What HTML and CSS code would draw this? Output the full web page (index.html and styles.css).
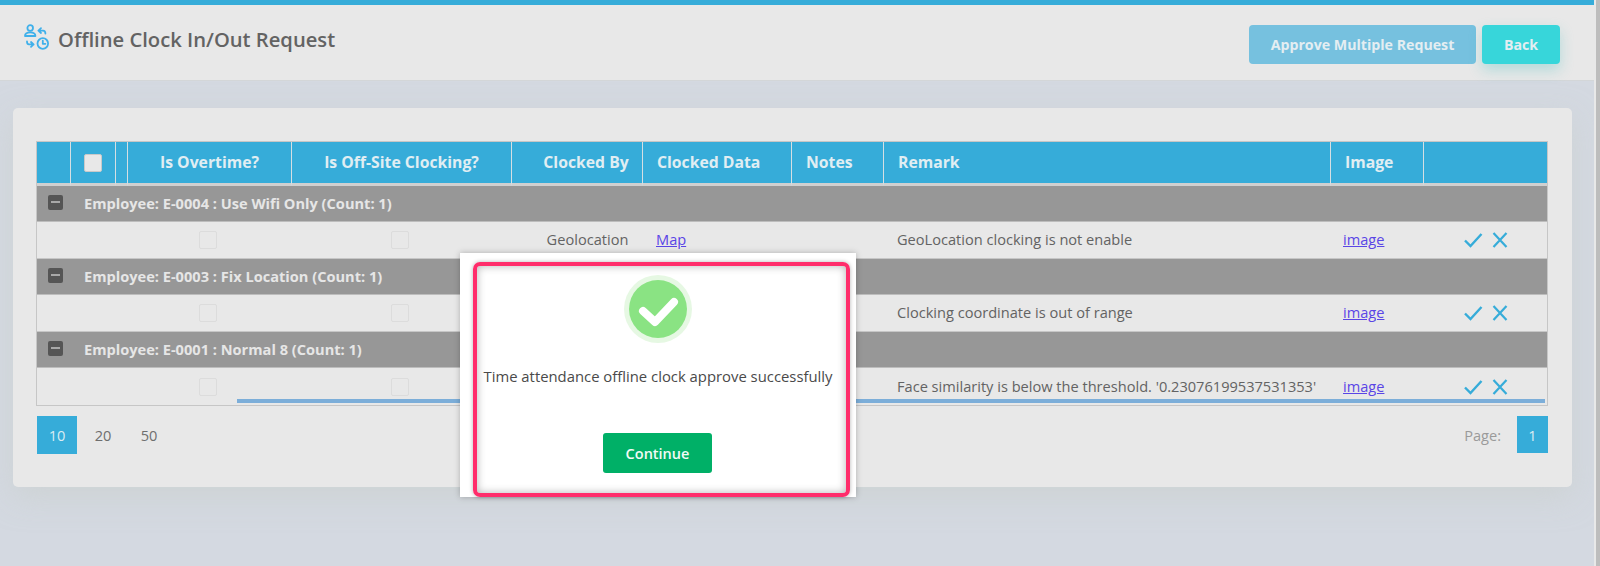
FILE: index.html
```html
<!DOCTYPE html>
<html lang="en">
<head>
<meta charset="utf-8">
<title>Offline Clock In/Out Request</title>
<link rel="stylesheet" href="styles.css">
</head>
<body>
<div class="page">
  <div class="accent"></div>
  <header class="topbar">
    <div class="title-wrap">
      <svg class="title-icon" viewBox="0 0 26 26" fill="none" stroke="#3fb0ea" stroke-width="1.8" stroke-linecap="round" stroke-linejoin="round">
        <circle cx="6.2" cy="4" r="2.8"/>
        <path d="M1 12c0-2.6 2-3.7 5.2-3.7s5.2 1.1 5.2 3.7z"/>
        <path d="M17 4.2l-2.6 2.4L17 9M14.4 6.6h4.6c1.6 0 2.4 1 2.4 3"/>
        <path d="M7 18l2.6 2.4L7 22.8M9.6 20.4H5c-1.4 0-2-1-2-3"/>
        <circle cx="18.8" cy="19.5" r="5.3"/>
        <path d="M18.8 16.6v3.2h2.6"/>
      </svg>
      <h1 class="title">Offline Clock In/Out Request</h1>
    </div>
    <div class="actions">
      <button class="btn btn-approve">Approve Multiple Request</button>
      <button class="btn btn-back">Back</button>
    </div>
  </header>

  <main class="card">
    <div class="grid-wrap">
      <table class="grid">
        <colgroup>
          <col class="c-expand"><col class="c-check"><col class="c-narrow"><col class="c-ot"><col class="c-off"><col class="c-by"><col class="c-data"><col class="c-notes"><col class="c-remark"><col class="c-image"><col class="c-act">
        </colgroup>
        <thead>
          <tr>
            <th></th>
            <th><span class="box box-head"></span></th>
            <th></th>
            <th>Is Overtime?</th>
            <th>Is Off-Site Clocking?</th>
            <th class="by">Clocked By</th>
            <th class="left">Clocked Data</th>
            <th class="left">Notes</th>
            <th class="left">Remark</th>
            <th class="left">Image</th>
            <th></th>
          </tr>
        </thead>
        <tbody>
          <tr class="group">
            <td class="toggle-cell"><span class="toggle"></span></td>
            <td colspan="10">Employee: E-0004 : Use Wifi Only (Count: 1)</td>
          </tr>
          <tr class="row">
            <td></td><td></td><td></td>
            <td class="center"><span class="box"></span></td>
            <td class="center"><span class="box"></span></td>
            <td class="center by">Geolocation</td>
            <td><a href="#">Map</a></td>
            <td></td>
            <td>GeoLocation clocking is not enable</td>
            <td class="image-cell"><a href="#">image</a></td>
            <td class="row-actions">
              <svg class="act act-ok" viewBox="0 0 20 16" fill="none" stroke="#36acd9" stroke-width="2.4"><path d="M2 8.5l5.5 5.5L18.5 2"/></svg>
              <svg class="act act-no" viewBox="0 0 16 16" fill="none" stroke="#36acd9" stroke-width="2.2"><path d="M1.5 1l13 14M14.5 1l-13 14"/></svg>
            </td>
          </tr>
          <tr class="group">
            <td class="toggle-cell"><span class="toggle"></span></td>
            <td colspan="10">Employee: E-0003 : Fix Location (Count: 1)</td>
          </tr>
          <tr class="row">
            <td></td><td></td><td></td>
            <td class="center"><span class="box"></span></td>
            <td class="center"><span class="box"></span></td>
            <td></td><td></td><td></td>
            <td>Clocking coordinate is out of range</td>
            <td class="image-cell"><a href="#">image</a></td>
            <td class="row-actions">
              <svg class="act act-ok" viewBox="0 0 20 16" fill="none" stroke="#36acd9" stroke-width="2.4"><path d="M2 8.5l5.5 5.5L18.5 2"/></svg>
              <svg class="act act-no" viewBox="0 0 16 16" fill="none" stroke="#36acd9" stroke-width="2.2"><path d="M1.5 1l13 14M14.5 1l-13 14"/></svg>
            </td>
          </tr>
          <tr class="group">
            <td class="toggle-cell"><span class="toggle"></span></td>
            <td colspan="10">Employee: E-0001 : Normal 8 (Count: 1)</td>
          </tr>
          <tr class="row last">
            <td></td><td></td><td></td>
            <td class="center"><span class="box"></span></td>
            <td class="center"><span class="box"></span></td>
            <td></td><td></td><td></td>
            <td>Face similarity is below the threshold. '0.23076199537531353'</td>
            <td class="image-cell"><a href="#">image</a></td>
            <td class="row-actions">
              <svg class="act act-ok" viewBox="0 0 20 16" fill="none" stroke="#36acd9" stroke-width="2.4"><path d="M2 8.5l5.5 5.5L18.5 2"/></svg>
              <svg class="act act-no" viewBox="0 0 16 16" fill="none" stroke="#36acd9" stroke-width="2.2"><path d="M1.5 1l13 14M14.5 1l-13 14"/></svg>
            </td>
          </tr>
        </tbody>
      </table>
      <div class="scroll-thumb"></div>
    </div>

    <div class="pager">
      <div class="sizes">
        <span class="size active">10</span>
        <span class="size">20</span>
        <span class="size">50</span>
      </div>
      <div class="pages">
        <span class="page-label">Page:</span>
        <span class="page-num">1</span>
      </div>
    </div>
  </main>
</div>
<div class="scrollbar"></div>

<div class="dialog">
  <div class="dialog-frame">
    <svg class="ok" viewBox="0 0 68 68">
      <circle cx="34" cy="34" r="34" fill="#e6f8e3"/>
      <circle cx="34" cy="34" r="29" fill="#8ae383"/>
      <path d="M19 36l12 11 19-20" fill="none" stroke="#fff" stroke-width="8" stroke-linecap="round" stroke-linejoin="round"/>
    </svg>
    <p class="dialog-text">Time attendance offline clock approve successfully</p>
    <button class="btn-continue">Continue</button>
  </div>
</div>
</body>
</html>
```
FILE: styles.css
```css
* { box-sizing: border-box; }
html, body { margin: 0; padding: 0; }
body {
  height: 566px;
  overflow: hidden;
  display: flex;
  background: #e8e8e8;
  font-family: "Open Sans", "Liberation Sans", sans-serif;
  color: #5e5e5e;
}
.page {
  width: 1594px;
  height: 566px;
  flex: none;
  background: #d4d9e1;
}
.scrollbar {
  width: 6px;
  flex: none;
  border-left: 2px solid #e8e8e8;
  background: #bdbdbd;
}
.accent { height: 5px; background: #36acd9; }
.topbar {
  height: 76px;
  background: #e8e8e8;
  border-bottom: 1px solid #d3d6d8;
  display: flex;
  justify-content: space-between;
  align-items: flex-start;
  padding: 19px 34px 0 24px;
}
.title-wrap { display: flex; align-items: flex-start; }
.title-icon { width: 26px; height: 26px; flex: none; }
.title {
  margin: 2px 0 0 8px;
  font-size: 20.2px;
  line-height: 27px;
  font-weight: 600;
  color: #636363;
}
.actions { display: flex; gap: 6px; margin-top: 1px; }
.btn {
  height: 39px;
  border: 0;
  border-radius: 4px;
  font: 700 14.2px "Open Sans", sans-serif;
  color: #e4eef2;
}
.btn-approve { width: 227px; background: #76c1df; }
.btn-back { width: 78px; background: #37d6da; box-shadow: 0 6px 14px rgba(55, 190, 190, .3); }

.card {
  margin: 27px 0 0 13px;
  width: 1559px;
  height: 379px;
  padding: 33px 24px 0 23px;
  background: #e8e8e8;
  border-radius: 5px;
  box-shadow: 0 10px 30px rgba(200, 205, 200, .5);
}
.grid-wrap { position: relative; }
.grid {
  width: 1512px;
  table-layout: fixed;
  border-collapse: separate;
  border-spacing: 0;
  border: 1px solid #c6c6c6;
  font-size: 14.6px;
}
.c-expand { width: 33px; }
.c-check { width: 45px; }
.c-narrow { width: 12px; }
.c-ot { width: 164px; }
.c-off { width: 220px; }
.c-by { width: 131px; }
.c-data { width: 149px; }
.c-notes { width: 92px; }
.c-remark { width: 447px; }
.c-image { width: 93px; }
.grid th {
  height: 44px;
  padding: 0 0 2px;
  background: #36acd9;
  border-left: 1px solid #d5dfe3;
  border-bottom: 3px solid #d0d0d0;
  color: #e0eef3;
  font-weight: 700;
  font-size: 15.75px;
  text-align: center;
}
.grid th:first-child { border-left: 0; }
.grid th.left { text-align: left; padding-left: 14px; }
.grid th.by { padding-left: 18px; }
.box {
  display: inline-block;
  width: 18px;
  height: 18px;
  margin-right: 2px;
  border: 1px solid #dcdcdc;
  border-radius: 2px;
  vertical-align: middle;
}
.box-head { background: #e8e8e8; border-color: #c9c9c9; margin-right: 0; }
.group td {
  height: 36px;
  background: #979797;
  color: #e6e6e6;
  font-weight: 700;
  padding: 0 0 2px 14px;
  border-bottom: 1px solid #bdbdbd;
}
.group td.toggle-cell { padding: 0 0 3px 11px; }
.toggle {
  display: block;
  position: relative;
  width: 15px;
  height: 15px;
  background: #555;
  border-radius: 2px;
}
.toggle::after {
  content: "";
  position: absolute;
  left: 3px;
  right: 3px;
  top: 6px;
  height: 2px;
  background: #a8a8a8;
}
.row td {
  height: 37px;
  background: #e8e8e8;
  padding: 0 0 2px 14px;
  color: #636363;
  white-space: nowrap;
  overflow: hidden;
  border-bottom: 1px solid #c6c6c6;
}
.row.last td { border-bottom: 0; }
.row td:nth-child(-n+3) { padding: 0; }
.row td.center { text-align: center; padding: 0 0 3px; }
.row td.center.by { padding: 0 0 2px 22px; }
.row td.image-cell { padding-left: 13px; }
.row a { color: #5a45e6; }
.row td.row-actions { padding: 0 0 4px 40px; }
.act { height: 16px; vertical-align: middle; }
.act-ok { width: 20px; margin-right: 5px; }
.act-no { width: 16px; }

.scroll-thumb {
  position: absolute;
  left: 201px;
  right: 3px;
  bottom: 3px;
  height: 4px;
  background: #7caed9;
}

.pager {
  display: flex;
  justify-content: space-between;
  margin-top: 10px;
  font-size: 14.6px;
}
.sizes { display: flex; margin-left: 1px; }
.size {
  width: 46px;
  height: 38px;
  display: flex;
  align-items: center;
  justify-content: center;
  color: #6e6e6e;
}
.size.active {
  width: 40px;
  margin-right: 3px;
  background: #36acd9;
  color: #dcecf3;
}
.pages { display: flex; align-items: flex-start; }
.page-label { color: #9a9a9a; line-height: 38px; margin-right: 16px; }
.page-num {
  width: 31px;
  height: 37px;
  background: #36acd9;
  color: #dcecf3;
  display: flex;
  align-items: center;
  justify-content: center;
}

.dialog {
  position: absolute;
  left: 460px;
  top: 253px;
  width: 396px;
  height: 244px;
  background: #fff;
  box-shadow: 0 0 6px rgba(0, 0, 0, .25);
  padding: 9px 6px 0 13px;
}
.dialog-frame {
  height: 235px;
  border: 4px solid #ff2d6b;
  border-radius: 7px;
  box-shadow: 0 0 4px rgba(0, 0, 0, .3), inset 0 0 8px rgba(0, 0, 0, .3);
  display: flex;
  flex-direction: column;
  align-items: center;
  padding: 9px 7px 0 0;
}
.ok { width: 68px; height: 68px; flex: none; }
.dialog-text {
  margin: 21px 0 0;
  font-size: 14.85px;
  line-height: 24px;
  color: #4a4a4a;
  white-space: nowrap;
}
.btn-continue {
  margin: 45px 1px 0 0;
  width: 109px;
  height: 40px;
  border: 0;
  border-radius: 3px;
  background: #00b067;
  color: #f2fbf6;
  font: 600 14.5px "Open Sans", sans-serif;
}
```
